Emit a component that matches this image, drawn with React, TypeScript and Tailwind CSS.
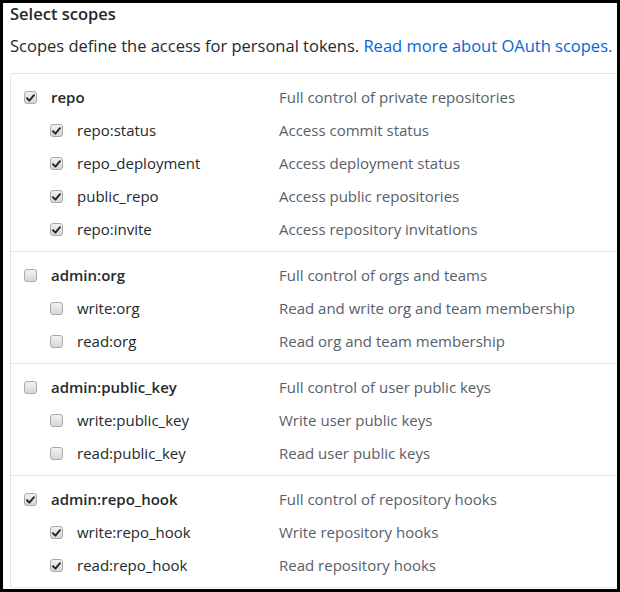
import React from 'react';

type Scope = { name: string; desc: string; checked: boolean };
type Group = { parent: Scope; children: Scope[] };

const GROUPS: Group[] = [
  {
    parent: { name: 'repo', desc: 'Full control of private repositories', checked: true },
    children: [
      { name: 'repo:status', desc: 'Access commit status', checked: true },
      { name: 'repo_deployment', desc: 'Access deployment status', checked: true },
      { name: 'public_repo', desc: 'Access public repositories', checked: true },
      { name: 'repo:invite', desc: 'Access repository invitations', checked: true },
    ],
  },
  {
    parent: { name: 'admin:org', desc: 'Full control of orgs and teams', checked: false },
    children: [
      { name: 'write:org', desc: 'Read and write org and team membership', checked: false },
      { name: 'read:org', desc: 'Read org and team membership', checked: false },
    ],
  },
  {
    parent: { name: 'admin:public_key', desc: 'Full control of user public keys', checked: false },
    children: [
      { name: 'write:public_key', desc: 'Write user public keys', checked: false },
      { name: 'read:public_key', desc: 'Read user public keys', checked: false },
    ],
  },
  {
    parent: { name: 'admin:repo_hook', desc: 'Full control of repository hooks', checked: true },
    children: [
      { name: 'write:repo_hook', desc: 'Write repository hooks', checked: true },
      { name: 'read:repo_hook', desc: 'Read repository hooks', checked: true },
    ],
  },
];

function Checkbox({ checked }: { checked: boolean }) {
  return (
    <span className="flex h-[13px] w-[13px] shrink-0 items-center justify-center rounded-[3px] border border-[#a9a9a9] bg-gradient-to-b from-[#f2f2f2] to-[#d6d6d6]">
      {checked && (
        <svg width="9" height="8" viewBox="0 0 9 8">
          <path d="M1 4.2 L3.4 6.6 L8 1.2" fill="none" stroke="#2a2a2a" strokeWidth="2" strokeLinecap="round" strokeLinejoin="round" />
        </svg>
      )}
    </span>
  );
}

function Row({ scope, child }: { scope: Scope; child?: boolean }) {
  return (
    <div className="flex h-[33px] items-center">
      <div className={`flex w-[268px] shrink-0 items-center gap-[14px] ${child ? 'pl-[39px]' : 'pl-[13px]'}`}>
        <Checkbox checked={scope.checked} />
        <span className={child ? 'text-[#24292e]' : 'font-semibold text-[#24292e]'}>{scope.name}</span>
      </div>
      <span className="whitespace-nowrap text-[#586069]">{scope.desc}</span>
    </div>
  );
}

export default function App() {
  return (
    <div className="h-[592px] w-[620px] bg-black p-[3px]">
      <div
        className="h-[586px] w-[614px] overflow-hidden bg-white pl-[7px] text-[15px] leading-none"
        style={{ fontFamily: '"Open Sans", "Noto Sans", sans-serif' }}
      >
        <h2 className="pt-[1px] text-[16.5px] font-semibold leading-[20px] text-[#24292e]">Select scopes</h2>
        <p className="mt-[12px] whitespace-nowrap text-[16.5px] leading-[20px] text-[#24292e]">
          Scopes define the access for personal tokens.{' '}
          <span className="text-[#0366d6]">Read more about OAuth scopes.</span>
        </p>
        <div className="mt-[17px] w-[640px] rounded-[3px] border border-[#e1e4e8]">
          {GROUPS.map((g, i) => (
            <div key={g.parent.name} className={`pt-[7px] pb-[5px] ${i > 0 ? 'border-t border-[#e1e4e8]' : ''}`}>
              <Row scope={g.parent} />
              {g.children.map((c) => (
                <Row key={c.name} scope={c} child />
              ))}
            </div>
          ))}
        </div>
      </div>
    </div>
  );
}
